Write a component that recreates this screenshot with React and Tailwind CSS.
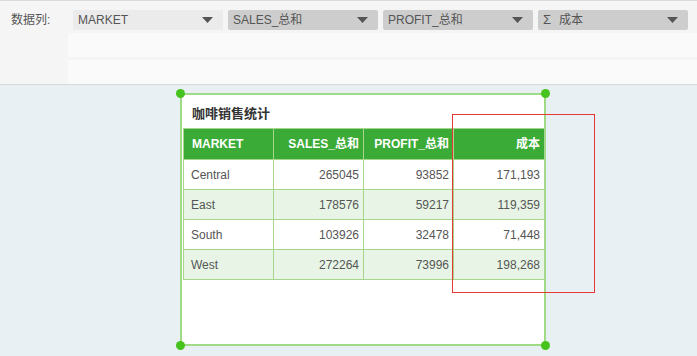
import React from 'react';

const rows = [
    { market: 'Central', sales: '265045', profit: '93852', cost: '171,193' },
    { market: 'East', sales: '178576', profit: '59217', cost: '119,359' },
    { market: 'South', sales: '103926', profit: '32478', cost: '71,448' },
    { market: 'West', sales: '272264', profit: '73996', cost: '198,268' },
];

function Caret() {
    return (
        <svg width="11" height="6" viewBox="0 0 11 6" className="shrink-0">
            <path d="M0 0 H11 L5.5 6 Z" fill="#555" />
        </svg>
    );
}

function Select({ label, light }) {
    return (
        <div
            className={`flex items-center justify-between w-[150px] h-[20px] rounded-[2px] pl-[5px] pr-[10px] text-[12px] text-[#555] ${
                light ? 'bg-[#ebebeb]' : 'bg-[#cdcdcd]'
            }`}
        >
            <span>{label}</span>
            <Caret />
        </div>
    );
}

function Handle({ pos }) {
    return <div className={`absolute w-[9px] h-[9px] rounded-full bg-[#46c31c] ${pos}`} />;
}

export default function App() {
    return (
        <div className="w-[697px] h-[356px] overflow-hidden bg-[#e9f0f4] font-['Liberation_Sans','Noto_Sans_CJK_SC',sans-serif]">
            {/* Field bar */}
            <div className="h-[85px] bg-[#f5f5f5] border-t border-b border-[#d9d9d9]">
                <div className="flex items-center h-[26px] mt-[6px]">
                    <span className="w-[73px] pl-[11px] text-[12px] text-[#555]">数据列:</span>
                    <div className="flex gap-[5px]">
                        <Select label="MARKET" light />
                        <Select label="SALES_总和" />
                        <Select label="PROFIT_总和" />
                        <Select label={<span><span className="mr-[8px] text-[13px]">Σ</span>成本</span>} />
                    </div>
                </div>
                <div className="ml-[68px] h-[24px] bg-[#fafafa]" />
                <div className="ml-[68px] mt-[3px] h-[24px] bg-[#fafafa]" />
            </div>

            {/* Canvas */}
            <div className="relative pt-[8px]">
                <div className="relative ml-[180px] w-[366px] h-[253px] border-2 border-[#9edb84] bg-white">
                    <Handle pos="-left-[6px] -top-[6px]" />
                    <Handle pos="-right-[6px] -top-[6px]" />
                    <Handle pos="-left-[6px] -bottom-[6px]" />
                    <Handle pos="-right-[6px] -bottom-[6px]" />

                    <div className="h-[33px] pl-[10px] pt-[9px] text-[13px] font-bold text-[#333]">咖啡销售统计</div>

                    <table className="ml-[1px] w-[361px] border-collapse text-[12px] table-fixed">
                        <colgroup>
                            <col className="w-[90px]" />
                            <col className="w-[90px]" />
                            <col className="w-[90px]" />
                            <col className="w-[91px]" />
                        </colgroup>
                        <thead>
                            <tr className="h-[31px] bg-[#3bab38] text-white">
                                <th className="border border-[#a6d68e] text-left pl-[8px] font-bold">MARKET</th>
                                <th className="border border-[#a6d68e] text-right pr-[4px] font-bold">SALES_总和</th>
                                <th className="border border-[#a6d68e] text-right pr-[4px] font-bold">PROFIT_总和</th>
                                <th className="border border-[#a6d68e] text-right pr-[4px] font-bold">成本</th>
                            </tr>
                        </thead>
                        <tbody className="text-[#555]">
                            {rows.map((r, i) => (
                                <tr key={r.market} className={`h-[30px] ${i % 2 ? 'bg-[#e8f5e6]' : 'bg-white'}`}>
                                    <td className="border border-[#a6d68e] pl-[7px]">{r.market}</td>
                                    <td className="border border-[#a6d68e] text-right pr-[4px]">{r.sales}</td>
                                    <td className="border border-[#a6d68e] text-right pr-[4px]">{r.profit}</td>
                                    <td className="border border-[#a6d68e] text-right pr-[4px]">{r.cost}</td>
                                </tr>
                            ))}
                        </tbody>
                    </table>
                </div>

                {/* selection outline */}
                <div className="absolute left-[452px] top-[29px] w-[143px] h-[179px] border border-[#e53935]" />
            </div>
        </div>
    );
}
